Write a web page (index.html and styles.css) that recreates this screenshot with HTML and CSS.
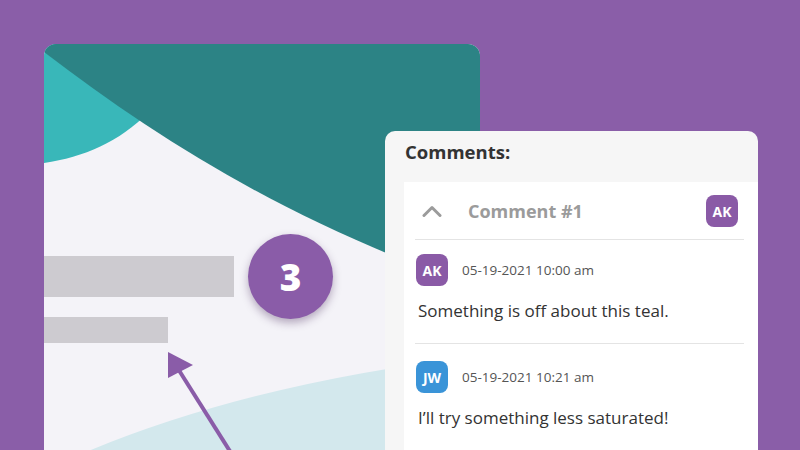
FILE: index.html
```html
<!DOCTYPE html>
<html lang="en">
<head>
<meta charset="utf-8">
<title>Comments</title>
<link rel="stylesheet" href="styles.css">
</head>
<body>
<div class="stage">
  <div class="card">
    <svg class="card-art" viewBox="0 0 436 420" width="436" height="420" aria-hidden="true">
      <path d="M0,0 L0,119 C40,113 75,98 105,68 L105,0 Z" fill="#39b7b9"/>
      <path d="M0,0 L0,8 C120,100 250,180 436,245 L436,0 Z" fill="#2c8385"/>
      <path d="M40,420 L42,408 Q210,338 436,312 L436,420 Z" fill="#d3e8ed"/>
      <line x1="131" y1="320" x2="194" y2="420" stroke="#8a5ca8" stroke-width="4"/>
      <polygon points="124,308 124,334 149,321" fill="#8a5ca8"/>
    </svg>
    <div class="card-content">
      <div class="bar bar-long"></div>
      <div class="bar bar-short"></div>
    </div>
    <div class="step-badge">3</div>
  </div>

  <section class="comments">
    <h2 class="comments-title">Comments:</h2>
    <div class="thread">
      <div class="thread-head">
        <svg class="chevron" viewBox="0 0 20 12" width="20" height="12" aria-hidden="true">
          <polyline points="2,10.5 10,2.5 18,10.5" fill="none" stroke="#9b9b9b" stroke-width="3" stroke-linecap="round" stroke-linejoin="round"/>
        </svg>
        <span class="thread-title">Comment #1</span>
        <span class="avatar avatar-purple head-avatar">AK</span>
      </div>
      <div class="comment">
        <div class="comment-meta">
          <span class="avatar avatar-purple">AK</span>
          <span class="comment-date">05-19-2021 10:00 am</span>
        </div>
        <p class="comment-text">Something is off about this teal.</p>
      </div>
      <div class="comment comment-second">
        <div class="comment-meta">
          <span class="avatar avatar-blue">JW</span>
          <span class="comment-date">05-19-2021 10:21 am</span>
        </div>
        <p class="comment-text">I’ll try something less saturated!</p>
      </div>
    </div>
  </section>
</div>
</body>
</html>
```

FILE: styles.css
```css
* { box-sizing: border-box; }

html, body {
  margin: 0;
  padding: 0;
}

body {
  font-family: "Open Sans", "Liberation Sans", sans-serif;
  background: #8a5ea8;
}

.stage {
  position: relative;
  width: 800px;
  height: 450px;
  overflow: hidden;
  background: #8a5ea8;
  padding: 44px 0 0 44px;
}

.card {
  position: relative;
  width: 436px;
  height: 420px;
  border-radius: 12px;
  background: #f4f3f8;
  overflow: hidden;
}

.card-art {
  position: absolute;
  left: 0;
  top: 0;
  display: block;
}

.card-content {
  position: relative;
  display: flex;
  flex-direction: column;
  gap: 20px;
  padding-top: 212px;
}

.bar {
  background: #cdcbd0;
}

.bar-long {
  width: 190px;
  height: 41px;
}

.bar-short {
  width: 124px;
  height: 26px;
}

.step-badge {
  position: absolute;
  left: 204px;
  top: 190px;
  width: 85px;
  height: 85px;
  border-radius: 50%;
  background: #8a5ca8;
  color: #ffffff;
  display: flex;
  align-items: center;
  justify-content: center;
  font-family: "Open Sans", sans-serif;
  font-weight: 800;
  font-size: 37px;
  box-shadow: 0 4px 9px rgba(60, 30, 80, 0.35);
}

.comments {
  position: absolute;
  left: 385px;
  top: 131px;
  width: 373px;
  height: 340px;
  background: #f6f6f6;
  border-radius: 10px;
}

.comments-title {
  margin: 0;
  padding: 9px 20px 0;
  font-size: 18.5px;
  line-height: 24px;
  font-weight: 700;
  color: #333333;
}

.thread {
  margin: 18px 0 0 19px;
  background: #ffffff;
  padding: 0 14px 0 11px;
  height: 300px;
}

.thread-head {
  display: flex;
  align-items: center;
  height: 58px;
  padding: 1px 6px 0 7px;
  border-bottom: 1px solid #e4e4e4;
}

.chevron {
  display: block;
  flex: none;
}

.thread-title {
  margin-left: 26px;
  font-size: 18px;
  font-weight: 700;
  color: #9b9b9b;
}

.head-avatar {
  margin-left: auto;
}

.avatar {
  flex: none;
  width: 32px;
  height: 32px;
  border-radius: 8px;
  display: flex;
  align-items: center;
  justify-content: center;
  color: #ffffff;
  font-size: 14px;
  font-weight: 700;
}

.avatar-purple {
  background: #8a5aa6;
}

.avatar-blue {
  background: #3a94d8;
}

.comment {
  padding: 14px 0 20px 1px;
  border-bottom: 1px solid #e4e4e4;
}

.comment-second {
  padding-top: 17px;
  border-bottom: none;
}

.comment-meta {
  display: flex;
  align-items: center;
  gap: 14px;
}

.comment-date {
  font-size: 13.5px;
  color: #555555;
}

.comment-text {
  margin: 13px 0 0;
  padding-left: 2px;
  font-size: 17px;
  line-height: 24px;
  color: #333333;
}
```
